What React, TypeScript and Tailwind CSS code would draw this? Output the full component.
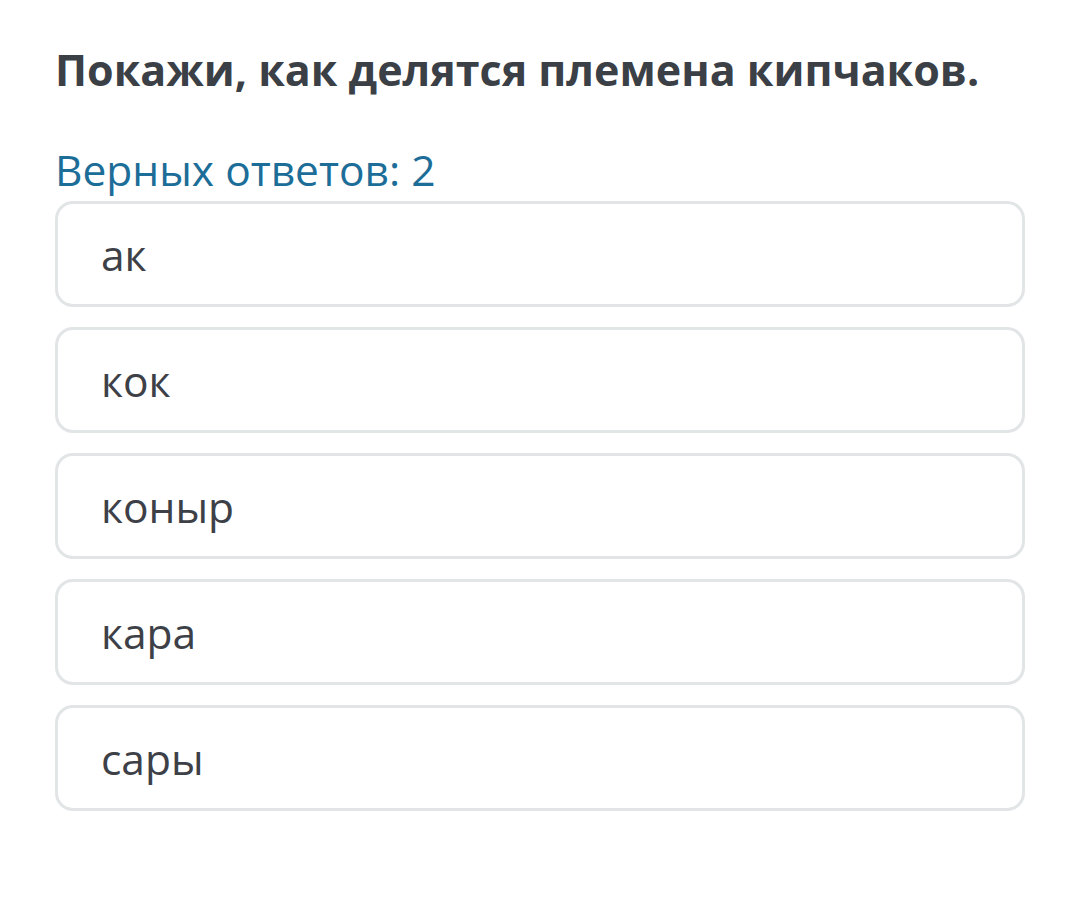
const options = ['ак', 'кок', 'коныр', 'кара', 'сары'];

export default function App() {
  return (
    <div
      className="w-[1080px] h-[908px] bg-white pl-[55px] pr-[55px] pt-[40px]"
      style={{ fontFamily: '"Open Sans", sans-serif' }}
    >
      <h1 className="text-[43px] leading-[60px] font-bold text-[#3b4046]">
        Покажи, как делятся племена кипчаков.
      </h1>
      <div className="mt-[42px] text-[42.5px] leading-[56px] text-[#1c6d98]">
        Верных ответов: 2
      </div>
      <div className="mt-[3px] flex flex-col gap-[20px]">
        {options.map((opt) => (
          <div
            key={opt}
            className="h-[106px] border-[3px] border-[#e1e5e6] rounded-[18px] flex items-center pl-[43px] pt-[2px]"
          >
            <span className="text-[42.5px] text-[#3d4147]">{opt}</span>
          </div>
        ))}
      </div>
    </div>
  );
}
